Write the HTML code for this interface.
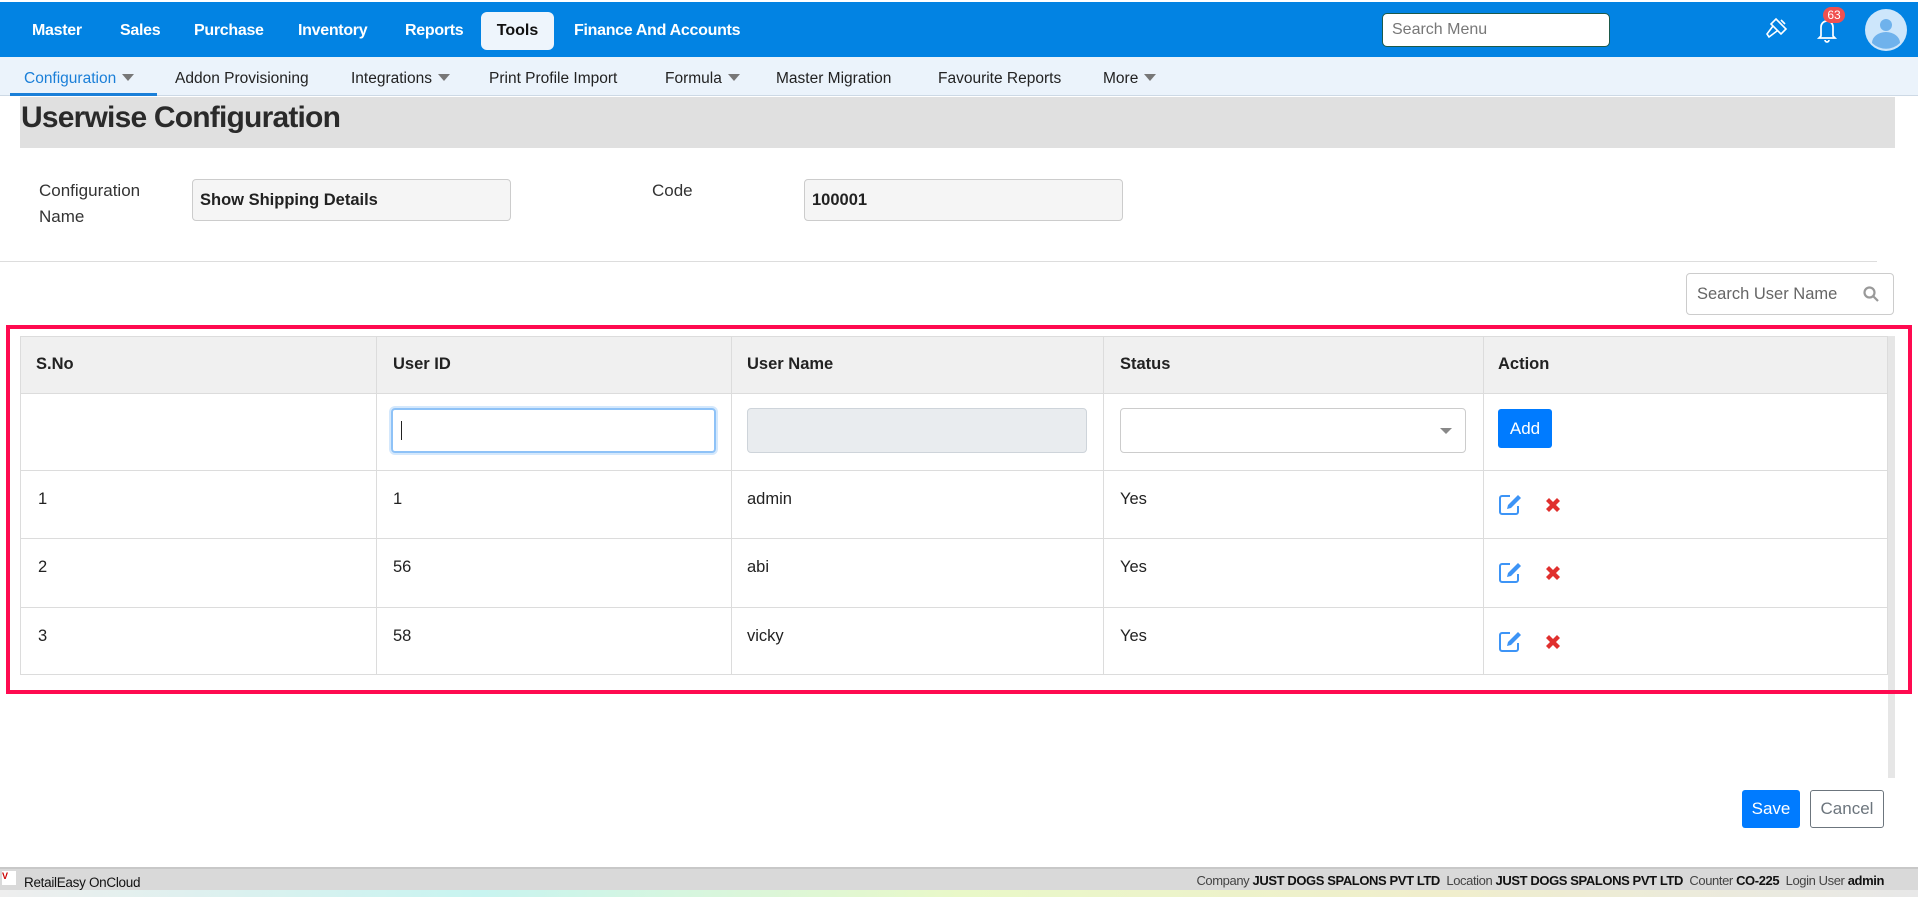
<!DOCTYPE html>
<html><head><meta charset="utf-8"><style>
*{box-sizing:border-box;margin:0;padding:0}
body{width:1918px;height:897px;overflow:hidden;font-family:"Liberation Sans",sans-serif;background:#fff;position:relative;color:#222}
.abs{position:absolute}
.top{left:0;top:2px;width:1918px;height:55px;background:#0283e3}
.nav{top:22px;color:#fff;font-weight:bold;font-size:16px;letter-spacing:-0.3px}
.tools{left:481px;top:12px;width:73px;height:38px;background:#eef5fc;border-radius:6px;color:#111;font-weight:bold;font-size:16px;text-align:center;line-height:38px}
.search{left:1382px;top:13px;width:228px;height:34px;background:#fff;border:1px solid #1d5a4a;border-radius:5px;color:#777;font-size:16px;padding:7px 9px}
.sub{left:0;top:57px;width:1918px;height:39px;background:#ebf3fb;border-bottom:1px solid #cdd9e5}
.si{top:70px;font-size:15.5px;color:#222}
.caret{display:inline-block;width:0;height:0;border-left:6px solid transparent;border-right:6px solid transparent;border-top:7px solid #777;margin-left:6px;vertical-align:2px}
.band{left:20px;top:97px;width:1875px;height:51px;background:#e0e0e0}
.inp{height:42px;background:#f5f5f5;border:1px solid #ccc;border-radius:4px;font-weight:bold;font-size:16.5px;padding:11px 7px;color:#222}
.lbl{font-size:17px;color:#333;line-height:26px}
.tbl{left:20px;top:336px;width:1868px;height:339px;border:1px solid #dcdcdc}
.th{background:#f0f0f0}
.vl{position:absolute;width:1px;background:#dcdcdc;top:336px;height:339px}
.hl{position:absolute;height:1px;background:#dcdcdc;left:20px;width:1868px}
.t{position:absolute;font-size:16.5px;color:#222}
.h{font-weight:bold}
</style></head><body>
<div class="abs top"></div>
<div class="abs nav" style="left:32px">Master</div>
<div class="abs nav" style="left:120px">Sales</div>
<div class="abs nav" style="left:194px">Purchase</div>
<div class="abs nav" style="left:298px">Inventory</div>
<div class="abs nav" style="left:405px">Reports</div>
<div class="abs tools">Tools</div>
<div class="abs nav" style="left:574px">Finance And Accounts</div>
<div class="abs search">Search Menu</div>
<svg class="abs" style="left:1762px;top:14px" width="30" height="30" viewBox="0 0 30 30" fill="none" stroke="#fff" stroke-width="1.6"><path d="M14 5l10 10-5 5-10-10z M17 8l3 3 M19 6l4 4 M11 12l-6 8 2 3 8-6"/></svg>
<svg class="abs" style="left:1813px;top:14px" width="28" height="32" viewBox="0 0 28 32" fill="none" stroke="#fff" stroke-width="1.7"><path d="M8 22V13a6 6 0 0 1 12 0v9l2 2H6z M12 26a2 2 0 0 0 4 0"/></svg>
<div class="abs" style="left:1823px;top:7px;width:22px;height:16px;background:#f05050;border-radius:8px;color:#fff;font-size:12px;text-align:center;line-height:16px">63</div>
<svg class="abs" style="left:1865px;top:9px" width="42" height="42" viewBox="0 0 42 42"><circle cx="21" cy="21" r="21" fill="#cde6fb"/><circle cx="21" cy="16" r="6" fill="#6fb2ec"/><path d="M7 34a14 11 0 0 1 28 0a20 20 0 0 1-28 0z" fill="#6fb2ec"/></svg>
<div class="abs sub"></div>
<div class="abs si" style="left:24px;color:#1a7fd8">Configuration<span class="caret"></span></div>
<div class="abs" style="left:10px;top:93px;width:147px;height:3px;background:#1a7fd8"></div>
<div class="abs si" style="left:175px">Addon Provisioning</div>
<div class="abs si" style="left:351px">Integrations<span class="caret"></span></div>
<div class="abs si" style="left:489px">Print Profile Import</div>
<div class="abs si" style="left:665px">Formula<span class="caret"></span></div>
<div class="abs si" style="left:776px">Master Migration</div>
<div class="abs si" style="left:938px">Favourite Reports</div>
<div class="abs si" style="left:1103px">More<span class="caret"></span></div>
<div class="abs band"></div>
<div class="abs" style="left:21px;top:101px;font-size:30px;font-weight:bold;color:#2a2a2a;letter-spacing:-0.8px">Userwise Configuration</div>
<div class="abs lbl" style="left:39px;top:178px">Configuration<br>Name</div>
<div class="abs inp" style="left:192px;top:179px;width:319px">Show Shipping Details</div>
<div class="abs lbl" style="left:652px;top:178px">Code</div>
<div class="abs inp" style="left:804px;top:179px;width:319px">100001</div>
<div class="abs" style="left:0;top:261px;width:1877px;height:1px;background:#ddd"></div>
<div class="abs" style="left:1686px;top:273px;width:208px;height:42px;border:1px solid #ccc;border-radius:4px;font-size:16.5px;color:#666;padding:11px 10px">Search User Name</div>
<svg class="abs" style="left:1862px;top:285px" width="18" height="18" viewBox="0 0 18 18" fill="none" stroke="#999" stroke-width="2.2"><circle cx="7.5" cy="7.5" r="5"/><path d="M11 11l5 5"/></svg>
<div class="abs" style="left:1888px;top:336px;width:7px;height:442px;background:#e6e6e6"></div>
<div class="abs tbl"></div>
<div class="abs th" style="left:21px;top:337px;width:1866px;height:56px"></div>
<div class="vl" style="left:376px"></div><div class="vl" style="left:731px"></div><div class="vl" style="left:1103px"></div><div class="vl" style="left:1483px"></div>
<div class="hl" style="top:393px"></div><div class="hl" style="top:470px"></div><div class="hl" style="top:538px"></div><div class="hl" style="top:607px"></div>
<div class="t h" style="left:36px;top:355px">S.No</div>
<div class="t h" style="left:393px;top:355px">User ID</div>
<div class="t h" style="left:747px;top:355px">User Name</div>
<div class="t h" style="left:1120px;top:355px">Status</div>
<div class="t h" style="left:1498px;top:355px">Action</div>
<div class="abs" style="left:391px;top:408px;width:325px;height:45px;border:2px solid #8ec2f7;border-radius:4px;box-shadow:0 0 0 2px #d4e8fc"></div>
<div class="abs" style="left:401px;top:421px;width:1px;height:19px;background:#222"></div>
<div class="abs" style="left:747px;top:408px;width:340px;height:45px;background:#e9ecef;border:1px solid #ced4da;border-radius:4px"></div>
<div class="abs" style="left:1120px;top:408px;width:346px;height:45px;border:1px solid #ccc;border-radius:4px"></div>
<div class="abs" style="left:1440px;top:428px;border-left:6px solid transparent;border-right:6px solid transparent;border-top:6px solid #888"></div>
<div class="abs" style="left:1498px;top:409px;width:54px;height:39px;background:#007bff;border-radius:3px;color:#fff;font-size:17px;text-align:center;line-height:39px">Add</div>
<div class="t" style="left:38px;top:490px">1</div><div class="t" style="left:393px;top:490px">1</div><div class="t" style="left:747px;top:490px">admin</div><div class="t" style="left:1120px;top:490px">Yes</div>
<div class="t" style="left:38px;top:558px">2</div><div class="t" style="left:393px;top:558px">56</div><div class="t" style="left:747px;top:558px">abi</div><div class="t" style="left:1120px;top:558px">Yes</div>
<div class="t" style="left:38px;top:627px">3</div><div class="t" style="left:393px;top:627px">58</div><div class="t" style="left:747px;top:627px">vicky</div><div class="t" style="left:1120px;top:627px">Yes</div>
<svg width="0" height="0" style="position:absolute"><defs>
<symbol id="ed" viewBox="0 0 26 22"><path d="M12 3H4a2 2 0 0 0-2 2v14a2 2 0 0 0 2 2h14a2 2 0 0 0 2-2v-6" fill="none" stroke="#3d94f6" stroke-width="2"/><path d="M9 16l1-4 10-10 3 3-10 10z" fill="#3d94f6"/></symbol>
<symbol id="x" viewBox="0 0 20 20"><path d="M3 6l3-3 4 4 4-4 3 3-4 4 4 4-3 3-4-4-4 4-3-3 4-4z" fill="#e0302e"/></symbol></defs></svg>
<svg class="abs" style="left:1498px;top:493px" width="26" height="22"><use href="#ed"/></svg><svg class="abs" style="left:1543px;top:495px" width="20" height="20"><use href="#x"/></svg>
<svg class="abs" style="left:1498px;top:561px" width="26" height="22"><use href="#ed"/></svg><svg class="abs" style="left:1543px;top:563px" width="20" height="20"><use href="#x"/></svg>
<svg class="abs" style="left:1498px;top:630px" width="26" height="22"><use href="#ed"/></svg><svg class="abs" style="left:1543px;top:632px" width="20" height="20"><use href="#x"/></svg>
<div class="abs" style="left:6px;top:325px;width:1906px;height:369px;border:4px solid #ff0a50"></div>
<div class="abs" style="left:1742px;top:790px;width:58px;height:38px;background:#007bff;border-radius:3px;color:#fff;font-size:17px;text-align:center;line-height:38px">Save</div>
<div class="abs" style="left:1810px;top:790px;width:74px;height:38px;border:1px solid #6c757d;border-radius:3px;color:#6c757d;font-size:17px;text-align:center;line-height:36px">Cancel</div>
<div class="abs" style="left:0;top:867px;width:1918px;height:30px;background:#d9d9d9;border-top:2px solid #c8c8c8"></div>
<div class="abs" style="left:0;top:890px;width:1918px;height:7px;background:linear-gradient(90deg,#eee,#c8f4f0,#e9f8c8,#f0eecc,#e8e8e8)"></div>
<div class="abs" style="left:2px;top:871px;width:14px;height:14px;background:#fff;color:#c00;font-size:9px;font-weight:bold">V</div>
<div class="abs" style="left:24px;top:875px;font-size:13.5px;color:#111;letter-spacing:-0.3px">RetailEasy OnCloud</div>
<div class="abs" style="right:34px;top:873px;font-size:13px;color:#444;white-space:nowrap;letter-spacing:-0.4px">Company <b style="color:#111">JUST DOGS SPALONS PVT LTD</b>&nbsp; Location <b style="color:#111">JUST DOGS SPALONS PVT LTD</b>&nbsp; Counter <b style="color:#111">CO-225</b>&nbsp; Login User <b style="color:#111">admin</b></div>
</body></html>
